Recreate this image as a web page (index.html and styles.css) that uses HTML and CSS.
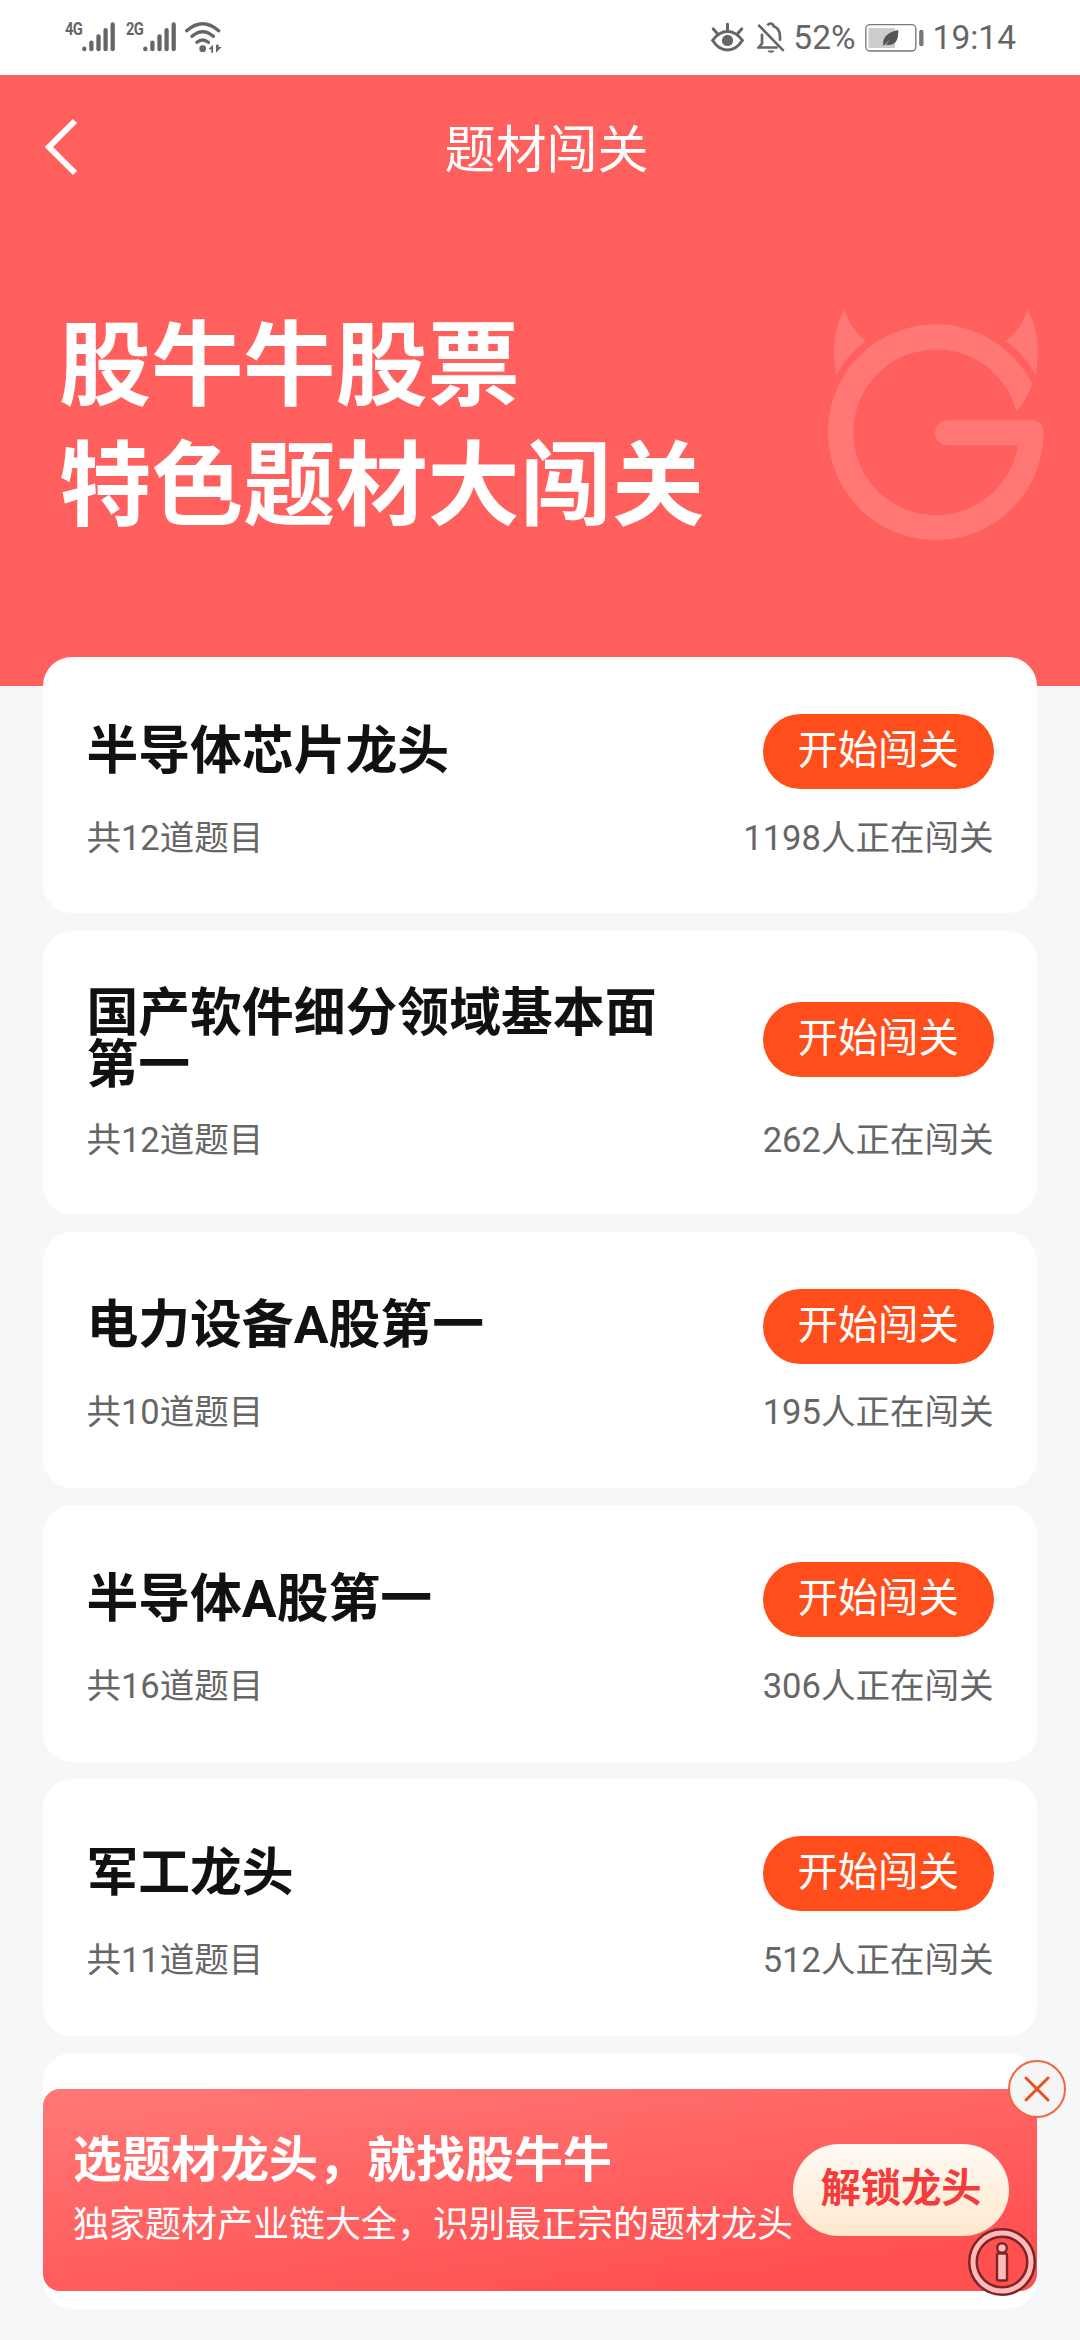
FILE: index.html
```html
<!DOCTYPE html>
<html lang="zh-CN">
<head>
    <meta charset="UTF-8">
    <meta name="viewport" content="width=device-width, initial-scale=1.0">
    <title>题材闯关</title>
    <link rel="stylesheet" href="styles.css">
</head>
<body>
    <div class="status-bar">
        <div class="status-left">
            <span class="net">4G</span>
            <svg class="signal" viewBox="0 0 100 96" fill="none" stroke="#666" stroke-width="13" stroke-linecap="round">
                <path d="M7 83V85M28.500 65V85M50 46V85M71.500 27V85M93 10V85"/>
            </svg>
            <span class="net net-2">2G</span>
            <svg class="signal" viewBox="0 0 100 96" fill="none" stroke="#666" stroke-width="13" stroke-linecap="round">
                <path d="M7 83V85M28.500 65V85M50 46V85M71.500 27V85M93 10V85"/>
            </svg>
            <svg class="wifi" viewBox="0 0 114 96" fill="none" stroke="#666" stroke-width="10" stroke-linecap="round">
                <path d="M8 29Q56 -13 104 29M24 46Q56 18 88 46M39 64Q56 50 73 64"/>
                <circle cx="56" cy="83" r="10" fill="#666" stroke="none"/>
                <path d="M74 83L87 71V95H82V86ZM96 71V95L113 78H104V71Z" fill="#666" stroke="none"/>
            </svg>
        </div>
        <div class="status-right">
            <svg class="eye" viewBox="0 0 100 92" fill="none" stroke="#666" stroke-width="9" stroke-linecap="round">
                <path d="M5 55Q24 28 50 28T95 55Q76 84 50 84T5 55ZM50 6V26M7 20L19 34M93 20L81 34"/>
                <circle cx="50" cy="55" r="17" fill="#666" stroke="none"/>
            </svg>
            <svg class="bell" viewBox="0 0 84 92" fill="none" stroke="#666" stroke-width="8">
                <path d="M4 8L80 86M32 10Q34 4 41 4T50 12Q69 19 69 42V56M15 35V64L5 76H62"/>
                <path d="M31 85H53Q50 92 42 92T31 85Z" fill="#666" stroke="none"/>
            </svg>
            <span class="percent">52%</span>
            <svg class="battery" viewBox="0 0 176 84">
                <rect x="2" y="2" width="150" height="79" rx="12" fill="#fff" stroke="#777" stroke-width="4"/>
                <rect x="10" y="12" width="80" height="60" rx="4" fill="#ccc"/>
                <path d="M54 62Q51 29 99 18Q102 60 72 63H62L76 44L56 65Z" fill="#555"/>
                <rect x="162" y="17" width="13" height="50" rx="6" fill="#777"/>
            </svg>
            <span class="time">19:14</span>
        </div>
    </div>

    <div class="header">
        <div class="nav">
            <svg class="back" viewBox="0 0 36 58" fill="none" stroke="#fff" stroke-width="6">
                <path d="M32 3L6 29L32 55"/>
            </svg>
            <h1>题材闯关</h1>
        </div>
        <div class="hero">
            <h2>股牛牛股票<br>特色题材大闯关</h2>
            <svg class="logo" viewBox="84 88 649 696" fill="#ff7875">
                <path d="M443 422H697Q732 424 732 460A324 324 0 1 1 698 313Q681 359 650 395A249 249 0 1 0 655 497H443A37.500 37.500 0 0 1 443 422Z"/>
                <path d="M132 88Q152 148 198 184Q142 224 109 286Q87 177 132 88ZM684 88Q664 148 618 184Q674 224 708 286Q729 177 684 88Z"/>
            </svg>
        </div>
    </div>

    <div class="list">
        <div class="card">
            <div class="card-top">
                <h3>半导体芯片龙头</h3>
                <button class="start">开始闯关</button>
            </div>
            <div class="card-info">
                <span>共12道题目</span>
                <span>1198人正在闯关</span>
            </div>
        </div>
        <div class="card">
            <div class="card-top">
                <h3>国产软件细分领域基本面第一</h3>
                <button class="start">开始闯关</button>
            </div>
            <div class="card-info">
                <span>共12道题目</span>
                <span>262人正在闯关</span>
            </div>
        </div>
        <div class="card">
            <div class="card-top">
                <h3>电力设备A股第一</h3>
                <button class="start">开始闯关</button>
            </div>
            <div class="card-info">
                <span>共10道题目</span>
                <span>195人正在闯关</span>
            </div>
        </div>
        <div class="card">
            <div class="card-top">
                <h3>半导体A股第一</h3>
                <button class="start">开始闯关</button>
            </div>
            <div class="card-info">
                <span>共16道题目</span>
                <span>306人正在闯关</span>
            </div>
        </div>
        <div class="card">
            <div class="card-top">
                <h3>军工龙头</h3>
                <button class="start">开始闯关</button>
            </div>
            <div class="card-info">
                <span>共11道题目</span>
                <span>512人正在闯关</span>
            </div>
        </div>
        <div class="card"></div>
    </div>

    <!-- 底部悬浮广告 -->
    <div class="banner">
        <div class="banner-text">
            <h4>选题材龙头，就找股牛牛</h4>
            <p>独家题材产业链大全，识别最正宗的题材龙头</p>
        </div>
        <button class="unlock">解锁龙头</button>
        <svg class="close" viewBox="0 0 58 58" fill="#f6f5f5" stroke="#f0683f" stroke-width="2">
            <circle cx="29" cy="29" r="28"/>
            <path d="M18 18L40 40M40 18L18 40" stroke="#e8501f" stroke-width="3" stroke-linecap="round"/>
        </svg>
        <svg class="info" viewBox="0 0 70 70" fill="none">
            <circle cx="35" cy="35" r="29" stroke="#7d2428" stroke-width="10"/>
            <circle cx="35" cy="35" r="29" stroke="#ffb9b9" stroke-width="5"/>
            <g fill="#ffb9b9" stroke="#7d2428" stroke-width="2.400">
                <rect x="30" y="26.500" width="10" height="27" rx="1.500"/>
                <circle cx="35" cy="21" r="4.800"/>
            </g>
        </svg>
    </div>
</body>
</html>
```
FILE: styles.css
```css
* {
    margin: 0;
    padding: 0;
    box-sizing: border-box;
    font-family: Roboto, "Noto Sans CJK SC", sans-serif;
}

body {
    height: 2340px;
    background: #f5f7f9;
    overflow: hidden;
}

svg {
    display: block;
    flex-shrink: 0;
}

/* Status bar */
.status-bar {
    height: 75px;
    padding: 0 64px 0 65px;
    display: flex;
    justify-content: space-between;
    background: #fff;
    color: #666;
}

.status-left,
.status-right {
    display: flex;
    align-items: flex-start;
    padding-top: 21px;
}

.net {
    width: 17px;
    font-size: 18px;
    line-height: 15px;
    font-weight: bold;
    letter-spacing: -1px;
    white-space: nowrap;
    transform: scaleX(0.82);
    transform-origin: left;
}

.net-2 {
    margin-left: 11px;
}

.signal {
    width: 33px;
    height: 32px;
}

.wifi {
    width: 38px;
    height: 32px;
    margin-left: 8px;
}

.eye {
    width: 33px;
    height: 31px;
    margin-top: 1px;
}

.bell {
    width: 28px;
    height: 31px;
    margin: 1px 8px 0 13px;
}

.percent,
.time {
    font-size: 33.5px;
    line-height: 34px;
}

.battery {
    width: 59px;
    height: 28px;
    margin: 3px 9px 0 9px;
}

/* Header */
.header {
    height: 611px;
    background: #ff5f5d;
    color: #fff;
}

.nav {
    height: 143px;
    padding: 0 43px;
    display: flex;
    align-items: center;
}

.back {
    width: 36px;
    height: 58px;
}

.nav h1 {
    flex: 1;
    margin-right: 23px;
    padding-top: 8px;
    text-align: center;
    font-size: 51px;
    line-height: 60px;
    font-weight: 400;
}

.hero {
    padding: 84px 36px 0 59px;
    display: flex;
    justify-content: space-between;
}

.hero h2 {
    padding-top: 5px;
    font-size: 92.16px;
    line-height: 120px;
    font-weight: bold;
}

.logo {
    width: 216px;
    height: 232px;
    margin-top: 7px;
}

/* Card list */
.list {
    margin-top: -29px;
    padding: 0 43.2px;
    display: flex;
    flex-direction: column;
    gap: 17.3px;
}

.card {
    min-height: 256.4px;
    padding: 57px 43.2px 57px;
    border-radius: 28.8px;
    background: #fff;
}

.card-top {
    min-height: 75px;
    display: flex;
    align-items: center;
    justify-content: space-between;
}

.card h3 {
    width: 600px;
    font-size: 51.84px;
    line-height: 51.84px;
    font-weight: bold;
    color: #111;
}

.start {
    width: 231px;
    height: 75px;
    border: none;
    border-radius: 38px;
    background: #ff4e1b;
    color: #fff;
    font-size: 40.32px;
    line-height: 74px;
    padding-bottom: 1px;
}

.card-info {
    margin-top: 31.5px;
    display: flex;
    justify-content: space-between;
    font-size: 34.56px;
    line-height: 34.56px;
    color: #666;
}

/* Banner */
.banner {
    position: absolute;
    left: 43px;
    top: 2089px;
    width: 994px;
    height: 202px;
    padding: 0 29px 0 30px;
    display: flex;
    align-items: center;
    justify-content: space-between;
    border-radius: 17px;
    background: linear-gradient(172deg, #ff7675 5%, #ff5050 85%);
    color: #fff;
}

.banner-text {
    padding-top: 5px;
    white-space: nowrap;
}

.banner h4 {
    font-size: 49px;
    line-height: 65px;
    font-weight: bold;
}

.banner p {
    font-size: 36px;
    line-height: 64px;
    font-weight: 400;
}

.unlock {
    flex-shrink: 0;
    width: 216px;
    height: 92px;
    border: none;
    border-radius: 46px;
    background: linear-gradient(#fffaf4, #ffe8cd);
    color: #f43c3c;
    font-size: 40.32px;
    font-weight: bold;
    line-height: 89px;
    padding-bottom: 3px;
}

.close {
    position: absolute;
    right: -29px;
    top: -29px;
    width: 58px;
    height: 58px;
}

.info {
    position: absolute;
    right: 0;
    bottom: -6px;
    width: 70px;
    height: 70px;
}
```
